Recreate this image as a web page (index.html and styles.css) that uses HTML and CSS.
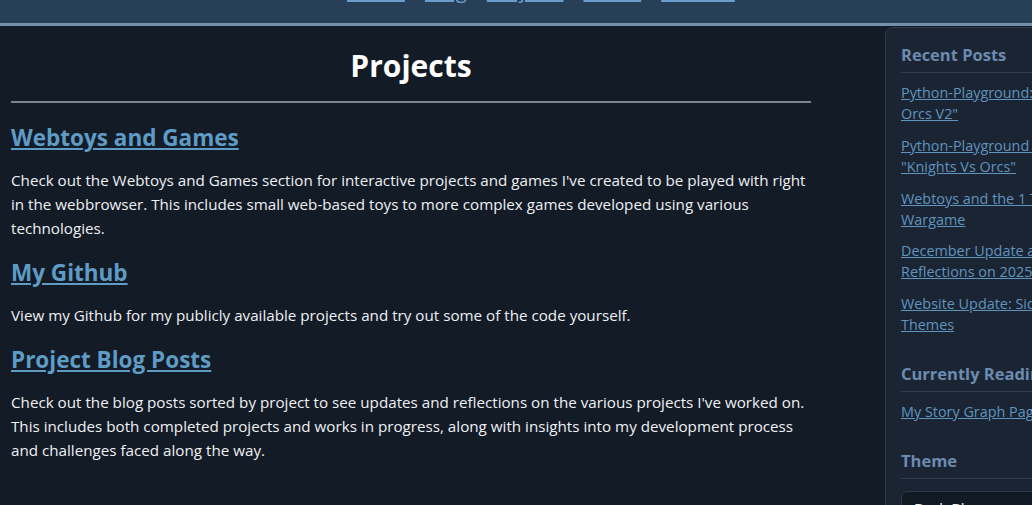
FILE: index.html
```html
<!DOCTYPE html>
<html lang="en">
<head>
<meta charset="utf-8">
<title>Projects</title>
<link rel="stylesheet" href="styles.css">
</head>
<body>
<header class="site-header">
  <nav class="nav">
    <a href="#">Home</a>
    <a href="#">Blog</a>
    <a href="#">Projects</a>
    <a href="#">About</a>
    <a href="#">Contact</a>
  </nav>
</header>
<div class="layout">
  <main class="content">
    <h1 class="page-title">Projects</h1>
    <section class="project">
      <h2><a href="#">Webtoys and Games</a></h2>
      <p>Check out the Webtoys and Games section for interactive projects and games I've created to be played with right in the webbrowser. This includes small web-based toys to more complex games developed using various technologies.</p>
    </section>
    <section class="project">
      <h2><a href="#">My Github</a></h2>
      <p>View my Github for my publicly available projects and try out some of the code yourself.</p>
    </section>
    <section class="project">
      <h2><a href="#">Project Blog Posts</a></h2>
      <p>Check out the blog posts sorted by project to see updates and reflections on the various projects I've worked on. This includes both completed projects and works in progress, along with insights into my development process and challenges faced along the way.</p>
    </section>
  </main>
  <aside class="sidebar">
    <div class="widget">
      <h3>Recent Posts</h3>
      <ul class="post-list">
        <li><a href="#">Python-Playground: "Knights Vs<br>Orcs V2"</a></li>
        <li><a href="#">Python-Playground Devlog:<br>"Knights Vs Orcs"</a></li>
        <li><a href="#">Webtoys and the 1 Tile<br>Wargame</a></li>
        <li><a href="#">December Update and<br>Reflections on 2025</a></li>
        <li><a href="#">Website Update: Sidebar and<br>Themes</a></li>
      </ul>
    </div>
    <div class="widget">
      <h3>Currently Reading</h3>
      <ul class="post-list">
        <li><a href="#">My Story Graph Page</a></li>
      </ul>
    </div>
    <div class="widget">
      <h3>Theme</h3>
      <select class="theme-select">
        <option>Dark Blue</option>
      </select>
    </div>
  </aside>
</div>
</body>
</html>
```

FILE: styles.css
```css
html, body {
  margin: 0;
  padding: 0;
}
body {
  background: #131b26;
  color: #eef0f3;
  font-family: "Open Sans", "Noto Sans", sans-serif;
  font-size: 15.2px;
  overflow: hidden;
  width: 1032px;
  height: 505px;
}
.site-header {
  background: #283f58;
  border-bottom: 3px solid #7391ad;
  height: 23px;
  overflow: hidden;
}
.nav {
  display: flex;
  gap: 20px;
  padding-left: 347px;
  margin-top: -21px;
  font-size: 20.5px;
  line-height: 22px;
}
.nav a {
  color: #6fa0c8;
  text-decoration-color: #6a9ccc;
}
.layout {
  display: flex;
  align-items: flex-start;
  gap: 74px;
  padding-left: 11px;
  width: 1300px;
}
.content {
  width: 800px;
  flex: none;
}
.page-title {
  text-align: center;
  font-size: 30px;
  font-weight: 700;
  margin: 22px 0 0;
  line-height: 36px;
  padding-bottom: 17px;
  border-bottom: 2px solid #7b838e;
  color: #ffffff;
}
.project h2 {
  font-size: 22.5px;
  font-weight: 700;
  margin: 18px 0 0;
  line-height: 34px;
}
.project + .project h2 {
  margin-top: 16px;
}
.project h2 a {
  color: #5e9cc6;
}
.project p {
  margin: 13px 0 0;
  line-height: 24px;
}
.sidebar {
  flex: none;
  width: 300px;
  margin-top: 1px;
  background: #1b2432;
  border: 1px solid #2c3a4c;
  border-radius: 8px 0 0 0;
  padding: 14px 15px 20px;
  min-height: 520px;
}
.widget {
  margin-bottom: 26px;
}
.widget h3 {
  margin: 0 0 9px;
  font-size: 16.5px;
  font-weight: 700;
  color: #6c8bb0;
  line-height: 26px;
  padding-bottom: 4px;
  border-bottom: 1px solid #2f3d50;
}
.post-list {
  list-style: none;
  margin: 0;
  padding: 0;
}
.post-list li {
  margin-bottom: 10.75px;
  line-height: 21px;
  font-size: 14.4px;
}
.post-list a {
  color: #5f94bf;
}
.theme-select {
  width: 200px;
  height: 34px;
  margin-top: 3px;
  background: #121a24;
  color: #f1f3f5;
  border: 1px solid #2c3a4c;
  border-radius: 6px;
  font-family: inherit;
  font-size: 15px;
  padding: 0 8px;
}
```
